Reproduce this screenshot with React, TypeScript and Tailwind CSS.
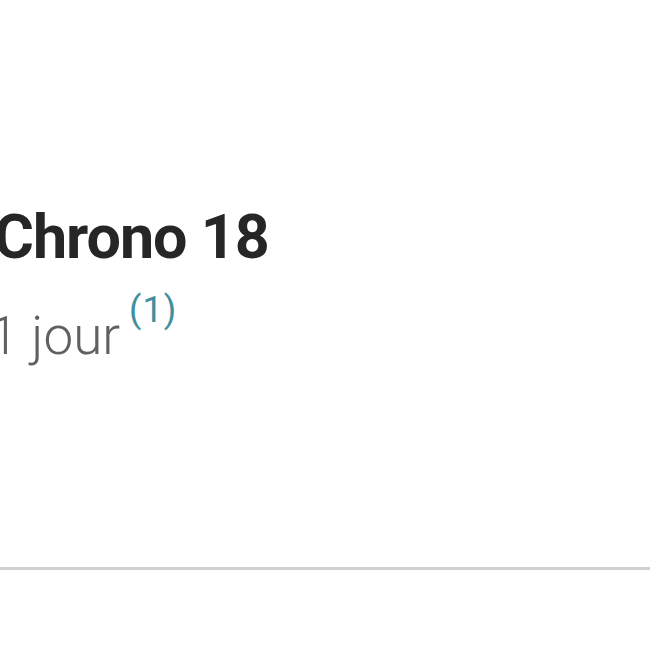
export default function App() {
  return (
    <div className="w-[650px] h-[650px] bg-white overflow-hidden" style={{ fontFamily: "Roboto, 'Liberation Sans', sans-serif" }}>
      <div className="pt-[207px] -ml-[6px]">
        <div className="text-[61px] leading-[61px] font-bold text-[#262626] tracking-[-1px] whitespace-nowrap">Chrono 18</div>
        <div className="mt-[42px] h-[53px] -ml-[5px] text-[53px] leading-[53px] font-light text-[#606060] flex items-start whitespace-nowrap">
          <span>1 jour</span>
          <span className="text-[36px] leading-[36px] font-normal text-[#3f8f9f] ml-[9px] tracking-[1px] relative top-[-18px]">(1)</span>
        </div>
      </div>
      <div className="mt-[204px] h-[3px] bg-[#d0d0d0] w-full" />
    </div>
  );
}
